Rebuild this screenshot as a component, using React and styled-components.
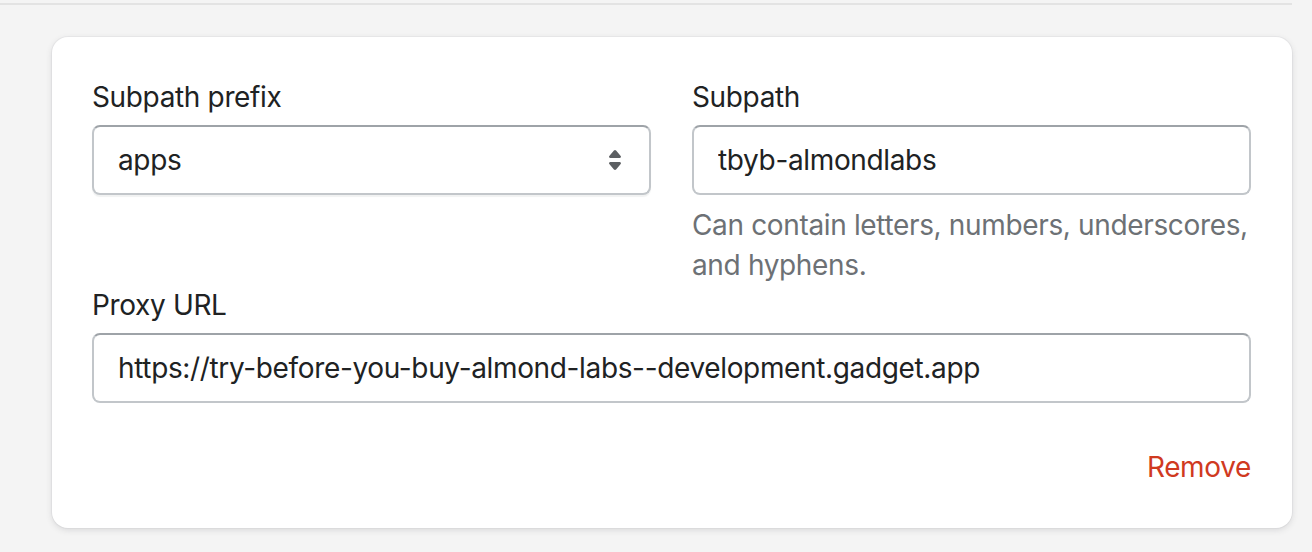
// Imports
import React from 'react';
import styled, { createGlobalStyle } from 'styled-components';

// Global
const GlobalStyle = createGlobalStyle`
	html, body{
		margin: 0;
		padding: 0;
		background: #f4f4f4;
	}
	body{
		font-family: Inter, "Noto Sans", "Liberation Sans", sans-serif;
		color: #202223;
		letter-spacing: -0.35px;
		-webkit-font-smoothing: antialiased;
	}
`;

// Select arrows
const SelectIcon = () => (
	<svg width="40" height="40" viewBox="0 0 20 20" fill="#5c5f62" aria-hidden="true">
		<path d="M7.676 9h4.648c.563 0 .879-.603.53-1.014l-2.323-2.746a.708.708 0 0 0-1.062 0l-2.324 2.746c-.347.411-.032 1.014.531 1.014Zm4.648 2h-4.648c-.563 0-.878.603-.53 1.014l2.323 2.746c.27.32.792.32 1.062 0l2.323-2.746c.349-.411.033-1.014-.53-1.014Z" />
	</svg>
);

// Component
const App = () => {

	// Return
	return(
		<Page>
			<GlobalStyle/>

			{/* Previous section edge */}
			<Divider/>

			{/* Card */}
			<Card>

				{/* Subpath row */}
				<Row>
					<Field>
						<Label>Subpath prefix</Label>
						<SelectBox>
							<SelectValue>apps</SelectValue>
							<SelectIcon/>
						</SelectBox>
					</Field>
					<Field>
						<Label>Subpath</Label>
						<TextInput readOnly value="tbyb-almondlabs" />
						<Help>Can contain letters, numbers, underscores, and hyphens.</Help>
					</Field>
				</Row>

				{/* Proxy */}
				<Field>
					<Label>Proxy URL</Label>
					<TextInput readOnly value="https://try-before-you-buy-almond-labs--development.gadget.app" />
				</Field>

				{/* Actions */}
				<Actions>
					<RemoveButton type="button">Remove</RemoveButton>
				</Actions>

			</Card>
		</Page>
	);

};

// Styled
const Page = styled.main`
	padding: 3px 20px 23px 0;
`;

const Divider = styled.div`
	height: 2px;
	background: #e3e3e3;
`;

const Card = styled.section`
	margin: 32px 0 0 52px;
	padding: 40px 41px 41px 40px;
	background: #ffffff;
	border-radius: 16px;
	box-shadow: 0 0 0 1px rgba(63, 63, 68, 0.04), 0 2px 6px 0 rgba(63, 63, 68, 0.15);
	display: flex;
	flex-direction: column;
`;

const Row = styled.div`
	display: grid;
	grid-template-columns: 1fr 1fr;
	column-gap: 41px;
	align-items: start;
`;

const Field = styled.div`
	display: flex;
	flex-direction: column;
	min-width: 0;
`;

const Label = styled.label`
	font-size: 28px;
	line-height: 40px;
	margin-bottom: 8px;
	color: #202223;
`;

const fieldBox = `
	box-sizing: border-box;
	height: 70px;
	width: 100%;
	border: 2px solid #c2c6ca;
	border-top-color: #9ea3a8;
	border-radius: 8px;
	background: #ffffff;
	font-family: Inter, "Noto Sans", "Liberation Sans", sans-serif;
	font-size: 28px;
	letter-spacing: -0.35px;
	color: #202223;
`;

const SelectBox = styled.div`
	${fieldBox}
	display: flex;
	align-items: center;
	justify-content: space-between;
	padding: 0 14px 0 24px;
	box-shadow: 0 2px 1px rgba(22, 29, 37, 0.06);
`;

const SelectValue = styled.span`
	line-height: 40px;
`;

const TextInput = styled.input`
	${fieldBox}
	padding: 0 24px;
	outline: none;
`;

const Help = styled.p`
	margin: 10px 0 0;
	font-size: 28px;
	line-height: 40px;
	color: #6d7175;
`;

const Actions = styled.div`
	display: flex;
	justify-content: flex-end;
	margin-top: 44px;
`;

const RemoveButton = styled.button`
	border: none;
	background: none;
	padding: 0;
	font-family: inherit;
	font-size: 28px;
	line-height: 40px;
	letter-spacing: inherit;
	color: #d03a1f;
	cursor: pointer;
`;

// Export
export default App;
